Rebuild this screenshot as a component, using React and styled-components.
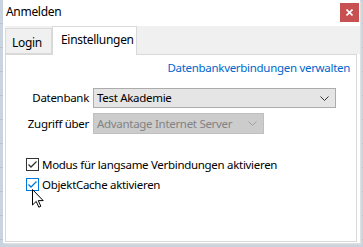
import React from "react";
import styled, { createGlobalStyle, css } from "styled-components";

const uiFont = css`
  font-family: "Noto Sans", "Open Sans", sans-serif;
  font-size: 11.5px;
  letter-spacing: -0.3px;
`;

const Global = createGlobalStyle`
  html, body { margin: 0; padding: 0; }
  body {
    background: #c9d4de;
    font-family: "Noto Sans", "Open Sans", sans-serif;
    color: #000;
  }
`;

const Desktop = styled.div`
  width: 363px;
  height: 247px;
  overflow: hidden;
  background: #c9d4de;
  background-image: repeating-linear-gradient(
    to bottom,
    transparent 0,
    transparent 23px,
    #b7c4cf 23px,
    #b7c4cf 24px
  );
  padding-left: 3px;
  box-sizing: border-box;
`;

const Window = styled.div`
  position: relative;
  width: 357px;
  height: 243px;
  background: #fff;
  box-shadow: 1px 1px 0 #e0e0e0, 2px 2px 0 #d4d8dc;
  display: flex;
  flex-direction: column;
  ${uiFont}
`;

const TitleBar = styled.div`
  height: 26px;
  display: flex;
  align-items: flex-start;
  padding-left: 3px;
  box-sizing: border-box;
`;

const Title = styled.div`
  font-size: 12px;
  line-height: 16px;
  padding-top: 4px;
`;

const CloseButton = styled.div`
  margin-left: auto;
  margin-top: 3px;
  margin-right: 1px;
  width: 19px;
  height: 19px;
  background: #c75050;
  display: flex;
  align-items: center;
  justify-content: center;
`;

const Body = styled.div`
  flex: 1;
  display: flex;
  flex-direction: column;
  padding-left: 2px;
`;

const TabStrip = styled.div`
  height: 28px;
  background: #f0f0f0;
  display: flex;
  align-items: flex-end;
`;

const Tab = styled.div`
  box-sizing: border-box;
  width: ${(p) => p.$w}px;
  height: ${(p) => (p.$active ? 29 : 26)}px;
  background: ${(p) => (p.$active ? "#fff" : "#f0f0f0")};
  border: 1px solid #d9d9d9;
  border-bottom: ${(p) => (p.$active ? "none" : "1px solid #d9d9d9")};
  margin-bottom: ${(p) => (p.$active ? "-1px" : "0")};
  position: relative;
  z-index: ${(p) => (p.$active ? 2 : 1)};
  padding-left: ${(p) => (p.$active ? 8 : 6)}px;
  padding-top: ${(p) => (p.$active ? 5 : 6)}px;
  font-size: 12px;
  line-height: 16px;
`;

const Panel = styled.div`
  box-sizing: border-box;
  height: 188px;
  margin-right: 3px;
  border: 1px solid #d9d9d9;
  background: #fff;
  position: relative;
  display: flex;
  flex-direction: column;
`;

const LinkRow = styled.div`
  display: flex;
  justify-content: flex-end;
  padding: 5px 6px 0 0;
`;

const Link = styled.span`
  color: #0066cc;
  line-height: 16px;
`;

const Form = styled.div`
  display: grid;
  grid-template-columns: 83px auto;
  column-gap: 4px;
  row-gap: 5px;
  margin-top: 12px;
  align-items: center;
  justify-items: start;
`;

const Label = styled.div`
  justify-self: end;
  line-height: 16px;
`;

const Select = styled.div`
  box-sizing: border-box;
  width: ${(p) => p.$w}px;
  height: ${(p) => p.$h}px;
  background: ${(p) => (p.$disabled ? "#cccccc" : "#e5e5e5")};
  border: 1px solid ${(p) => (p.$disabled ? "#bfbfbf" : "#acacac")};
  color: ${(p) => (p.$disabled ? "#838383" : "#000")};
  display: flex;
  align-items: center;
  padding: 0 6px 0 3px;
  line-height: 16px;
`;

const SelectText = styled.span`
  flex: 1;
`;

const Checks = styled.div`
  display: flex;
  flex-direction: column;
  gap: 7px;
  margin-top: 24px;
  padding-left: 20px;
`;

const CheckRow = styled.div`
  display: flex;
  align-items: center;
  gap: 3px;
  line-height: 13px;
`;

const Box = styled.div`
  box-sizing: border-box;
  width: 13px;
  height: 13px;
  border: 1px solid ${(p) => (p.$focus ? "#0078d7" : "#333")};
  background: #fff;
  display: flex;
  align-items: center;
  justify-content: center;
`;

const Cursor = styled.svg`
  position: absolute;
  left: 26px;
  top: 134px;
  z-index: 5;
`;

const Chevron = ({ color }) => (
  <svg width="9" height="5" viewBox="0 0 9 5">
    <polyline points="0.5,0.5 4.5,4.5 8.5,0.5" fill="none" stroke={color} strokeWidth="1" />
  </svg>
);

const Check = ({ color }) => (
  <svg width="11" height="11" viewBox="0 0 11 11">
    <polyline points="1.5,5.5 4,8 9.5,2.5" fill="none" stroke={color} strokeWidth="1.3" />
  </svg>
);

export default function App() {
  return (
    <>
      <Global />
      <Desktop>
        <Window>
          <TitleBar>
            <Title>Anmelden</Title>
            <CloseButton>
              <svg width="7" height="7" viewBox="0 0 7 7">
                <path d="M0.5 0.5 L6.5 6.5 M6.5 0.5 L0.5 6.5" stroke="#fff" strokeWidth="1.6" />
              </svg>
            </CloseButton>
          </TitleBar>
          <Body>
            <TabStrip>
              <Tab $w={47}>Login</Tab>
              <Tab $w={85} $active>Einstellungen</Tab>
            </TabStrip>
            <Panel>
              <LinkRow>
                <Link>Datenbankverbindungen verwalten</Link>
              </LinkRow>
              <Form>
                <Label>Datenbank</Label>
                <Select $w={243} $h={20}>
                  <SelectText>Test Akademie</SelectText>
                  <Chevron color="#333" />
                </Select>
                <Label>Zugriff über</Label>
                <Select $w={171} $h={21} $disabled>
                  <SelectText>Advantage Internet Server</SelectText>
                  <Chevron color="#a0a0a0" />
                </Select>
              </Form>
              <Checks>
                <CheckRow>
                  <Box>
                    <Check color="#333" />
                  </Box>
                  Modus für langsame Verbindungen aktivieren
                </CheckRow>
                <CheckRow>
                  <Box $focus>
                    <Check color="#0078d7" />
                  </Box>
                  ObjektCache aktivieren
                </CheckRow>
              </Checks>
              <Cursor width="12" height="19" viewBox="0 0 12 19">
                <path
                  d="M0.5 0.5 L0.5 16 L4.2 12.4 L6.8 18.2 L8.8 17.3 L6.3 11.6 L11.2 11.6 Z"
                  fill="#fff"
                  stroke="#000"
                  strokeWidth="1"
                  strokeLinejoin="round"
                />
              </Cursor>
            </Panel>
          </Body>
        </Window>
      </Desktop>
    </>
  );
}
